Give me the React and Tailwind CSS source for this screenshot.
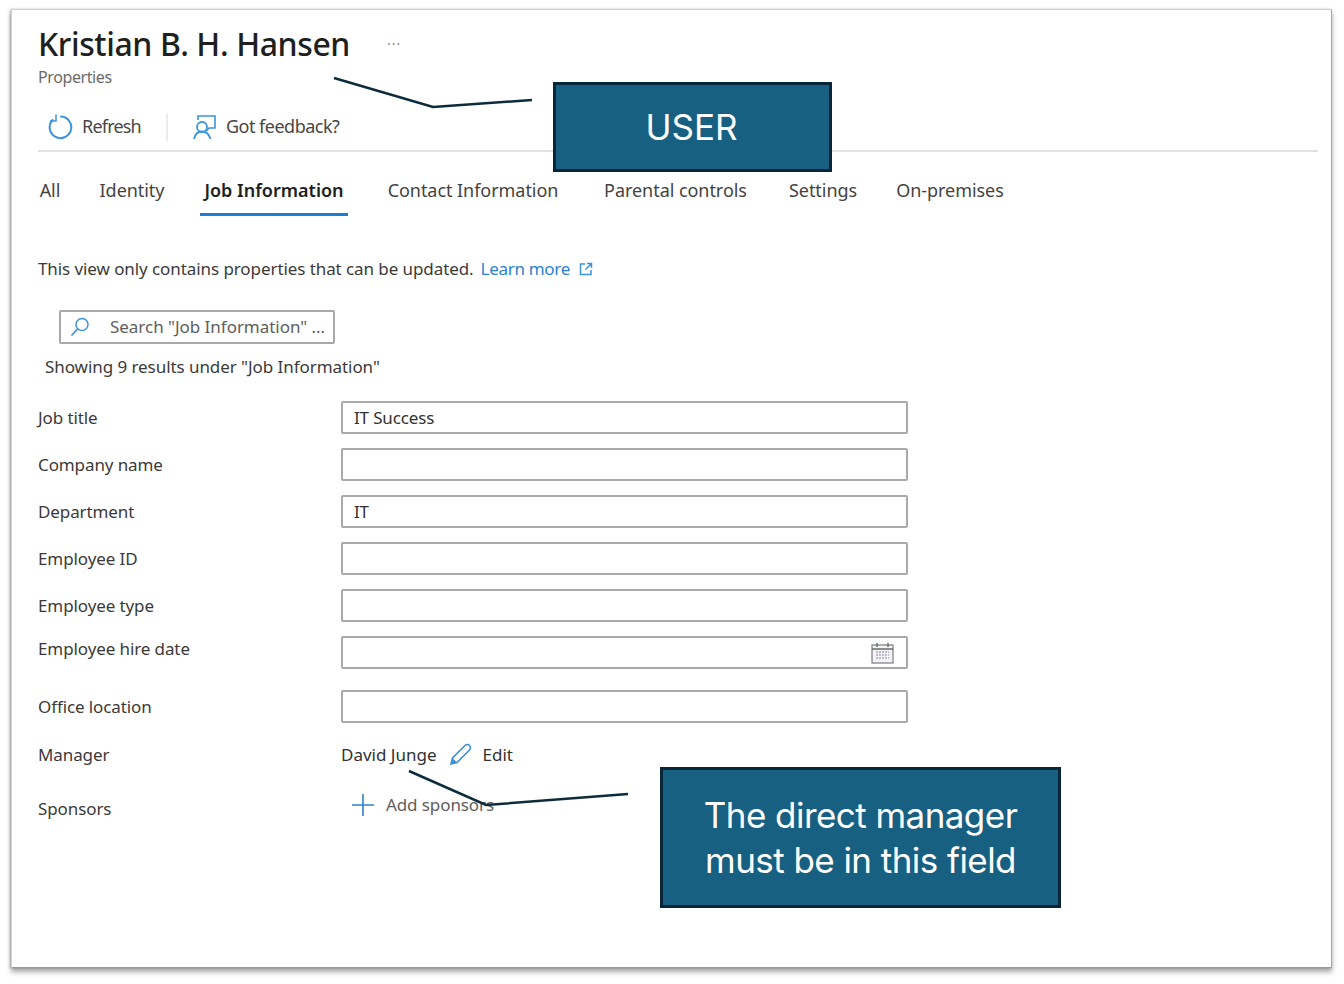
import React from "react";

const font = "font-['Noto_Sans','Open_Sans',sans-serif]";

function Row({ label, value, h = "h-[47px]", labelPad = "pt-[6px]", children }) {
  return (
    <div className={`flex items-start ${h}`}>
      <div className={`w-[304px] ${labelPad} text-[17px] leading-[22px] tracking-[-0.1px] text-[#3b3a39]`}>{label}</div>
      {children || (
        <div className="-ml-px flex h-[33px] w-[567px] items-center rounded-[2px] border-2 border-[#a9a9a9] px-[11px] text-[17px] tracking-[-0.15px] text-[#323130]">{value}</div>
      )}
    </div>
  );
}

function Tab({ children, active, w }) {
  return (
    <div className={`relative flex h-[50px] items-center justify-center text-[18px] ${w} ${active ? "font-semibold tracking-[0px] text-[#201f1e]" : "tracking-[-0.05px] text-[#44433f]"}`}>
      {children}
      {active && <div className="absolute -bottom-[1px] left-0 right-0 h-[3px] bg-[#1d7fd3]" />}
    </div>
  );
}

export default function App() {
  return (
    <div className={`relative h-[984px] w-[1344px] overflow-hidden bg-white ${font}`}>
      <div className="ml-[11px] mt-[9px] h-[959px] w-[1321px] border border-[#d2d2d2] border-b-[#9a9a9a] border-r-[#a8a8a8] bg-white pl-[26px] pr-[13px] shadow-[0_4px_5px_rgba(0,0,0,0.35),-1px_0_2px_rgba(0,0,0,0.25)]">
        <div className="flex items-center pt-[13px]">
          <h1 className="text-[32px] font-medium leading-[42px] tracking-[-0.4px] text-[#201f1e]">Kristian B. H. Hansen</h1>
          <span className="ml-[37px] text-[14px] leading-none tracking-[1px] text-[#8a8886]">···</span>
        </div>
        <div className="text-[16px] leading-[24px] tracking-[-0.4px] text-[#6b6a68]">Properties</div>
        <div className="mt-[16px] flex h-[47px] items-center border-b-2 border-[#e1e1e1] pb-[2px]">
          <svg width="26" height="28" viewBox="0 0 26 28" fill="none" className="ml-[9px]">
            <path d="M14 3.500A10.800 10.800 0 1 1 5.500 7" stroke="#3d94dc" strokeWidth="2" strokeLinecap="round" />
            <path d="M9 1.500V8H3" stroke="#3d94dc" strokeWidth="1.500" fill="none" />
          </svg>
          <span className="ml-[9px] text-[18px] tracking-[-0.8px] text-[#484644]">Refresh</span>
          <div className="ml-[25px] h-[28px] w-[2px] bg-[#ececec]" />
          <svg width="26" height="26" viewBox="0 0 26 26" fill="none" className="ml-[24px]">
            <circle cx="10" cy="13" r="5" stroke="#3d94dc" strokeWidth="1.800" />
            <path d="M2 25c1-5 4-7.500 8-7.500s7 2.500 8.500 7.500" stroke="#3d94dc" strokeWidth="1.800" />
            <path d="M6 6V2h17v12h-6l-2.500 3" stroke="#3d94dc" strokeWidth="1.600" />
          </svg>
          <span className="ml-[8px] text-[18px] tracking-[-0.5px] text-[#484644]">Got feedback?</span>
        </div>
        <div className="mt-[13px] flex h-[50px]">
          <Tab w="w-[24px]">All</Tab>
          <div className="w-[37px]" />
          <Tab w="w-[66px]">Identity</Tab>
          <div className="w-[35px]" />
          <Tab w="w-[148px]" active>Job Information</Tab>
          <div className="w-[39px]" />
          <Tab w="w-[172px]">Contact Information</Tab>
          <div className="w-[45px]" />
          <Tab w="w-[143px]">Parental controls</Tab>
          <div className="w-[41px]" />
          <Tab w="w-[70px]">Settings</Tab>
          <div className="w-[37px]" />
          <Tab w="w-[110px]">On-premises</Tab>
        </div>
        <div className="mt-[42px] flex h-[24px] items-center text-[17px] text-[#3b3a39]">
          <span className="tracking-[-0.08px]">This view only contains properties that can be updated.</span>
          <span className="ml-[7px] tracking-[-0.3px] text-[#2c82cf]">Learn more</span>
          <svg width="14" height="14" viewBox="0 0 14 14" fill="none" className="ml-[9px]">
            <path d="M6 2H1.500v10.500H12V8M8 1.500h4.500V6M12.500 1.500 6.500 7.500" stroke="#3d94dc" strokeWidth="1.500" />
          </svg>
        </div>
        <div className="ml-[21px] mt-[29px] flex h-[34px] w-[276px] items-center rounded-[2px] border-2 border-[#a9a9a9] text-[17px] tracking-[-0.03px] text-[#605e5c]">
          <svg width="20" height="20" viewBox="0 0 20 20" fill="none" className="ml-[9px]">
            <circle cx="12" cy="7.500" r="6" stroke="#3d94dc" strokeWidth="1.500" />
            <path d="M7.500 12 1.500 18.500" stroke="#3d94dc" strokeWidth="1.800" />
          </svg>
          <span className="ml-[20px]">Search "Job Information" ...</span>
        </div>
        <div className="ml-[7px] mt-[11px] h-[24px] text-[17px] leading-[24px] tracking-[-0.06px] text-[#3b3a39]">Showing 9 results under "Job Information"</div>
        <div className="mt-[22px]">
          <Row label="Job title" value="IT Success" />
          <Row label="Company name" />
          <Row label="Department" value="IT" />
          <Row label="Employee ID" />
          <Row label="Employee type" />
          <Row label="Employee hire date" h="h-[54px]" labelPad="pt-[2px]">
            <div className="-ml-px flex h-[33px] w-[567px] items-center justify-end rounded-[2px] border-2 border-[#a9a9a9] pr-[12px]">
              <svg width="23" height="22" viewBox="0 0 23 22" fill="none">
                <rect x="1" y="3" width="21" height="18" fill="#f4f3f6" stroke="#7d7a82" strokeWidth="1.200" />
                <path d="M1 7h21" stroke="#6a6a6a" strokeWidth="1.500" />
                <path d="M6 1v4M17 1v4" stroke="#4d7d5d" strokeWidth="1.500" />
                <path d="M5 10h13M5 13h13M5 16h13" stroke="#8a87a0" strokeWidth="1.200" strokeDasharray="2 1" />
              </svg>
            </div>
          </Row>
          <Row label="Office location" h="h-[48px]" />
          <div className="flex h-[54px] items-start">
            <div className="w-[304px] pt-[6px] text-[17px] leading-[22px] tracking-[-0.1px] text-[#3b3a39]">Manager</div>
            <div className="-ml-px flex items-center pt-[5px] text-[17px] leading-[22px] text-[#323130]">
              <span>David Junge</span>
              <svg width="23" height="23" viewBox="0 0 23 23" fill="none" className="ml-[12px]">
                <path d="M2 21l1.500-6L16 2.500a2.500 2.500 0 0 1 4.500 4.500L8 19.500z" stroke="#3d8fdc" strokeWidth="1.600" />
                <path d="M2 21l1.500-6 4.500 4.500z" fill="#3d8fdc" />
              </svg>
              <span className="ml-[11px]">Edit</span>
            </div>
          </div>
          <div className="flex items-start">
            <div className="w-[304px] pt-[6px] text-[17px] leading-[22px] tracking-[-0.1px] text-[#3b3a39]">Sponsors</div>
            <div className="flex items-center pt-[1px] text-[17px] leading-[22px] tracking-[-0.1px] text-[#605e5c]">
              <svg width="24" height="24" viewBox="0 0 24 24" fill="none" className="ml-[9px]">
                <path d="M12 1v22M1 12h22" stroke="#2c82cf" strokeWidth="1.600" />
              </svg>
              <span className="ml-[11px]">Add sponsors</span>
            </div>
          </div>
        </div>
      </div>

      <svg width="1344" height="984" className="pointer-events-none absolute left-0 top-0">
        <polyline points="334,78 433,107 532,100" fill="none" stroke="#0c2c3d" strokeWidth="2.500" />
        <polyline points="409,771 486,805 628,794" fill="none" stroke="#0c2c3d" strokeWidth="2.500" />
      </svg>

      <div className="absolute left-[553px] top-[82px] flex h-[90px] w-[279px] items-center justify-center border-[3px] border-[#082638] bg-[#176082] pr-[2px] font-['Inter',sans-serif] text-[35px] text-white">USER</div>
      <div className="absolute left-[660px] top-[767px] flex h-[141px] w-[401px] items-center justify-center border-[3px] border-[#082638] bg-[#176082] text-center font-['Inter',sans-serif] text-[35px] leading-[45px] tracking-[-0.55px] text-white">The direct manager<br />must be in this field</div>
    </div>
  );
}
